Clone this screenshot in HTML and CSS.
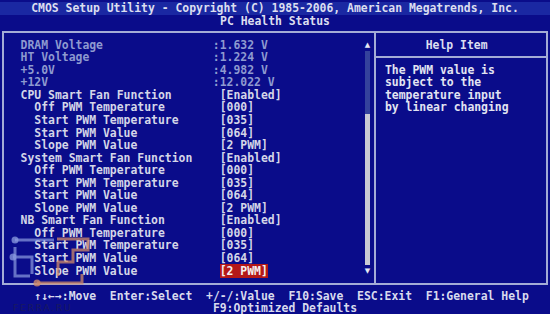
FILE: index.html
```html
<!DOCTYPE html>
<html lang="en">
  <head>
    <meta charset="UTF-8" />
    <title>PC Health Status</title>
    <link rel="stylesheet" href="styles.css">
  </head>
  <body>
    <div class="screen">
      <div class="head">
        <div class="title">CMOS Setup Utility - Copyright (C) 1985-2006, American Megatrends, Inc.</div>
        <div class="title">PC Health Status</div>
      </div>

      <div class="frame">
        <div class="main">
          <div class="list">
            <div class="row dim"><span class="lab">DRAM Voltage</span><span>:1.632 V</span></div>
            <div class="row dim"><span class="lab">HT Voltage</span><span>:1.224 V</span></div>
            <div class="row dim"><span class="lab">+5.0V</span><span>:4.982 V</span></div>
            <div class="row dim"><span class="lab">+12V</span><span>:12.022 V</span></div>

            <div class="row"><span class="lab">CPU Smart Fan Function</span><span class="opt">[Enabled]</span></div>
            <div class="row sub"><span class="lab">Off PWM Temperature</span><span class="opt">[000]</span></div>
            <div class="row sub"><span class="lab">Start PWM Temperature</span><span class="opt">[035]</span></div>
            <div class="row sub"><span class="lab">Start PWM Value</span><span class="opt">[064]</span></div>
            <div class="row sub"><span class="lab">Slope PWM Value</span><span class="opt">[2 PWM]</span></div>

            <div class="row"><span class="lab">System Smart Fan Function</span><span class="opt">[Enabled]</span></div>
            <div class="row sub"><span class="lab">Off PWM Temperature</span><span class="opt">[000]</span></div>
            <div class="row sub"><span class="lab">Start PWM Temperature</span><span class="opt">[035]</span></div>
            <div class="row sub"><span class="lab">Start PWM Value</span><span class="opt">[064]</span></div>
            <div class="row sub"><span class="lab">Slope PWM Value</span><span class="opt">[2 PWM]</span></div>

            <div class="row"><span class="lab">NB Smart Fan Function</span><span class="opt">[Enabled]</span></div>
            <div class="row sub"><span class="lab">Off PWM Temperature</span><span class="opt">[000]</span></div>
            <div class="row sub"><span class="lab">Start PWM Temperature</span><span class="opt">[035]</span></div>
            <div class="row sub"><span class="lab">Start PWM Value</span><span class="opt">[064]</span></div>
            <div class="row sub"><span class="lab">Slope PWM Value</span><span class="opt"><span class="sel">[2 PWM]</span></span></div>
          </div>

          <!-- полоса прокрутки -->
          <div class="scroll">
            <div class="arrow">▲</div>
            <div class="track"></div>
            <div class="thumb"></div>
            <div class="arrow">▼</div>
          </div>
        </div>

        <div class="help">
          <div class="help-title">Help Item</div>
          <div class="help-text">
            <div>The PWM value is</div>
            <div>subject to the</div>
            <div>temperature input</div>
            <div>by linear changing</div>
          </div>
        </div>
      </div>

      <div class="footer">
        <div class="keys">     ↑↓←→:Move  Enter:Select  +/-/:Value  F10:Save  ESC:Exit  F1:General Help</div>
        <div class="keys second">F9:Optimized Defaults</div>
      </div>
    </div>

    <!-- водяной знак -->
    <svg class="mark" width="110" height="84" viewBox="0 230 110 84">
      <g fill="none" stroke="#8c9ce0" stroke-width="3" opacity="0.7">
        <path d="M15 240 H54" />
        <path d="M13 257 H32 V274" />
        <path d="M15 247 V276 H30" />
      </g>
      <g fill="#8c9ce0" opacity="0.75">
        <circle cx="15" cy="240" r="3.5" />
        <circle cx="13" cy="257" r="3.5" />
      </g>
      <g fill="none" stroke="#d08a68" stroke-width="3" opacity="0.75">
        <path d="M57 239 H88 V250 H73 V262 H58 V276" />
        <path d="M37 283 H82 V274" />
      </g>
      <circle cx="37" cy="283" r="3.5" fill="#d08a68" opacity="0.8" />
      <text x="13" y="311" class="mark-text">FERRA.RU</text>
    </svg>
  </body>
</html>
```

FILE: styles.css
```css
* {
  box-sizing: border-box;
  margin: 0;
  padding: 0;
}

body {
  width: 550px;
  height: 314px;
  overflow: hidden;
  position: relative;
  background: #0a0c8a;
  color: #d4d6e8;
  font-family: "DejaVu Sans Mono", "Liberation Mono", monospace;
  font-weight: bold;
  font-size: 11.42px; /* 1ch = 6.875px, 80 колонок */
  line-height: 12.56px;
}

.head {
  padding-top: 2px;
}

.title {
  height: 12.56px;
  text-align: center;
  white-space: pre;
  color: #dcdef0;
}

.title:first-child {
  background: #1a28a2;
}

.frame {
  display: flex;
  width: 545.2px;
  height: 253.2px;
  margin: 4.3px 0 0 2.4px;
  border: 2px solid #a4acd6;
}

.main {
  display: flex;
  width: 369.3px;
  padding: 5.3px 0 0 16.2px;
}

.list {
  width: 50ch;
}

.row {
  display: flex;
  height: 12.56px;
  white-space: pre;
}

.row .lab {
  width: 28ch;
}

.row.sub .lab {
  padding-left: 2ch;
}

.row.dim {
  color: #8e9ad0;
}

.opt {
  padding-left: 1ch;
}

.sel {
  background: #b41818;
  color: #f4f0f0;
}

.scroll {
  display: flex;
  flex-direction: column;
  width: 1ch;
}

.arrow {
  height: 12.56px;
  font-family: "DejaVu Sans", sans-serif;
  font-size: 7px;
  text-align: center;
  color: #e8e8f4;
}

.track {
  height: 62.8px;
  margin: 0 1px;
  background: #34429c;
}

.thumb {
  height: 150.7px;
  margin: 0 1px;
  background: #c9cad4;
}

.help {
  flex: 1;
  border-left: 2px solid #a4acd6;
  padding-top: 5.3px;
}

.help-title {
  height: 12.56px;
  padding-right: 8px;
  text-align: center;
  color: #dcdef0;
}

.help-text {
  margin-top: 5.2px;
  border-top: 2px solid #a4acd6;
  padding: 5.4px 0 0 9.3px;
  color: #e2e4f2;
}

.help-text div {
  height: 12.56px;
  white-space: pre;
}

.footer {
  margin-top: 5.3px;
}

.keys {
  height: 12.56px;
  white-space: pre;
  color: #d8daee;
}

.keys.second {
  padding-left: 31ch;
}

.mark {
  position: absolute;
  left: 0;
  bottom: 0;
}

.mark-text {
  font-family: "DejaVu Sans", sans-serif;
  font-size: 9.5px;
  font-weight: normal;
  letter-spacing: 1.5px;
  fill: #1c1c5a;
  opacity: 0.85;
}
```
